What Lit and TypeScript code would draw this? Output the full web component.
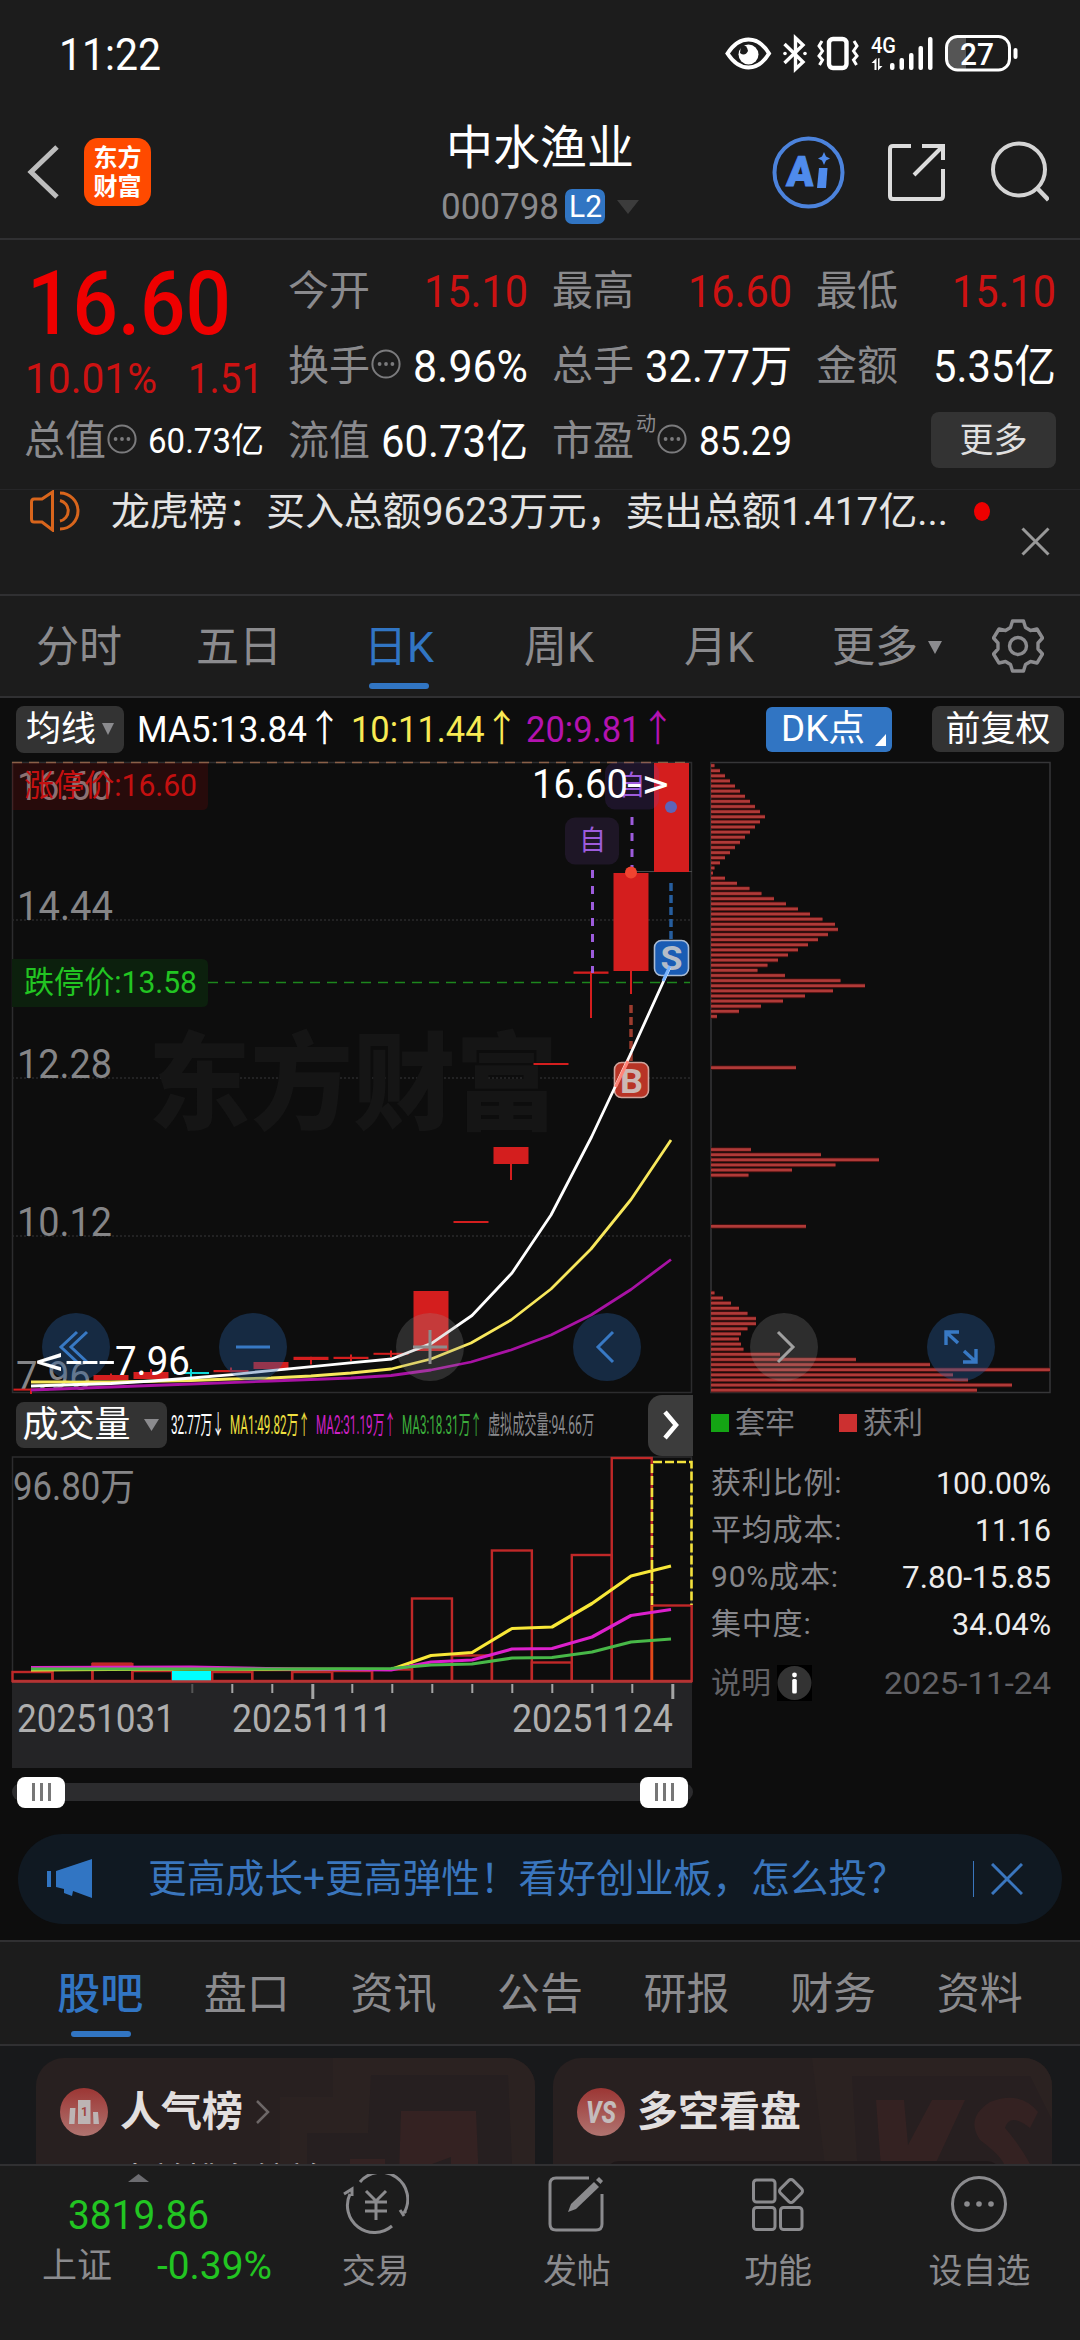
import { LitElement, html, svg, css } from "lit";
import { customElement, property } from "lit/decorators.js";

/** Single line of text condensed or stretched to a given width. */
@customElement("fit-text")
class FitText extends LitElement {
  @property({ type: Number }) w = 0;
  static styles = css`
    :host { display: inline-block; white-space: nowrap; line-height: 1; flex: none; }
    .in { display: inline-block; transform-origin: 0 50%; }
  `;
  fit() {
    const s = this.renderRoot.querySelector(".in") as HTMLElement;
    this.style.width = this.w + "px";
    s.style.transform = "none";
    const n = s.getBoundingClientRect().width;
    if (n > 0) s.style.transform = `scaleX(${this.w / n})`;
  }
  firstUpdated() {
    this.fit();
    requestAnimationFrame(() => this.fit());
  }
  render() {
    return html`<span class="in"><slot></slot></span>`;
  }
}

const RED = "#d41e1e";
const X = (i: number) => 31 + 40 * i;

const MA5 = "31,1386 111,1383.5 152,1381 192,1378 232,1374.6 268,1370.8 312,1366.6 350,1362.8 391.5,1359 431.5,1343.4 472,1315.5 512,1273 551,1215 591.5,1137 631,1053 670,967";
const MA10 = "31,1382 111,1382 191,1380.5 231,1379 271,1378 311,1376 351,1373 391,1369 431,1359 471,1343 511,1320 551,1289 591,1249 631,1199.5 671,1140";
const MA20 = "31,1390 111,1387 191,1384 271,1381 351,1378 391,1375.5 431,1370 471,1362 511,1350 551,1335 591,1315 631,1289.5 671,1259.5";

// center, body top, body bottom, wick top, wick bottom
const CANDLES: number[][] = [
  [31, 1388.6, 1390.6, 1388.6, 1394],
  [111, 1375, 1380, 1373.5, 1380],
  [151, 1372, 1379, 1369, 1379],
  [231, 1370, 1372.2, 1367.5, 1372],
  [271, 1362, 1369, 1362, 1369],
  [311, 1356.8, 1360, 1356.8, 1364.5],
  [351, 1356.8, 1359, 1354.5, 1361],
  [391, 1352.8, 1354.8, 1350.5, 1357],
  [431, 1291, 1351, 1291, 1351],
  [471, 1221, 1223, 1221, 1223],
  [511, 1147, 1164, 1147, 1180],
  [551, 1063, 1065, 1063, 1065],
  [591, 971.5, 973.8, 971.5, 1018],
  [631, 873, 971, 873, 994],
  [671.5, 763, 872, 763, 872],
];

const CHIPS: [number, number[]][] = [
  [0, [3.5, 9, 14, 19, 24, 29, 34, 39, 44, 49, 54, 49, 44, 39, 34, 29, 24, 19, 14, 9, 3.5, 2, 14, 26, 38.5, 50.5, 63, 75, 87, 99, 111.5, 124, 127, 117, 107, 97, 87, 77, 67, 56.5, 46.5, 74, 129.5, 154, 122, 94, 72, 50, 28, 6]],
  [59, [85]],
  [75, [40, 110, 168, 124.5, 81, 37.5]],
  [90, [95]],
  [103, [3.5, 12, 20, 28, 36.5, 45, 45, 36.5, 30, 28, 30, 32.5, 69, 145, 219, 339, 242, 257, 301, 266]],
];

const VOL_TOPS = [1672, 1669.5, 1664, 1671, 0, 1672, 1670, 1672, 1671, 1669.5, 1598.5, 1655.5, 1550.5, 1662.5, 1555, 1458, 1605.5];

const t = (x: number, y: number, size: number, w: number, s: string, fill: string, extra = "") =>
  svg`<text class=${extra} x=${x} y=${y} font-size=${size} textLength=${w} lengthAdjust="spacingAndGlyphs" fill=${fill}>${s}</text>`;

const more = html`<svg class="more-ico" width="30" height="30" viewBox="0 0 30 30"><circle cx="15" cy="15" r="13.6" fill="none" stroke="#7b7b7d" stroke-width="2"/><circle cx="8.6" cy="15" r="1.9" fill="#7b7b7d"/><circle cx="15" cy="15" r="1.9" fill="#7b7b7d"/><circle cx="21.4" cy="15" r="1.9" fill="#7b7b7d"/></svg>`;
const tri = (w: number, h: number, c: string) =>
  html`<svg width=${w} height=${h} viewBox="0 0 10 10" preserveAspectRatio="none"><path d="M0 0H10L5 10Z" fill=${c}/></svg>`;

@customElement("app-root")
class AppRoot extends LitElement {
  static styles = css`
    :host { display: block; width: 1080px; height: 2340px; overflow: hidden; background: #0d0d0d; color: #fff; font-family: Roboto, "Noto Sans CJK SC", sans-serif; line-height: 1; }
    * { box-sizing: border-box; }
    svg { display: block; flex: none; }
    svg text { font-family: Roboto, "Noto Sans CJK SC", sans-serif; }
    .row { display: flex; align-items: center; }
    .dark { background: #1c1c1c; }
    .gray { color: #8a8a8d; }
    .c1 { color: #f0e040; }
    .c2 { color: #cc20c4; }
    .c3 { color: #3cae3c; }
    .wm { font-weight: 900; }
    .mark { font-weight: 700; }

    .status { height: 108px; padding: 0 62px 0 59px; justify-content: space-between; font-size: 45px; }
    .status .icons { height: 40px; }

    .head { height: 132px; border-bottom: 2px solid #303032; padding: 0 31px 0 26px; display: grid; grid-template-columns: 285px 1fr 280px; align-items: start; }
    .head .left { padding-top: 30px; gap: 25px; }
    .logo { width: 67px; height: 68px; border-radius: 14px; background: #ff4a00; display: flex; flex-direction: column; align-items: center; justify-content: center; gap: 5px; font-weight: 700; font-size: 24px; }
    .mid { display: flex; flex-direction: column; align-items: center; padding-top: 16px; }
    .title { font-size: 47px; line-height: 48px; }
    .code { font-size: 37px; margin-top: 17px; gap: 6px; height: 35px; }
    .l2 { background: #3175c3; border-radius: 7px; width: 40px; height: 35px; display: flex; align-items: center; justify-content: center; font-size: 31px; color: #fff; }
    .code svg { margin-left: 6px; }
    .head .right { padding-top: 26px; justify-content: flex-end; }

    .quote { height: 249px; padding: 14px 24px 0; display: grid; grid-template-columns: repeat(4, 240px); column-gap: 24px; grid-template-rows: 75px 75px 75px; }
    .cell { justify-content: space-between; font-size: 41px; }
    .cell .lab { height: 44px; }
    .cell .num { font-size: 44px; }
    .cell .sm { font-size: 35px; }
    .cell .md { font-size: 40px; }
    .r { color: #cc1212; }
    .price { grid-row: span 2; }
    .big { font-size: 89px; font-weight: 500; color: #ee0000; margin: 5px 0 0 3px; }
    .chg { font-size: 42px; gap: 31px; margin: 10px 0 0 1px; }
    .more-ico { margin: -5px 0 0 1px; }
    .sup { font-size: 20px; align-self: flex-start; margin: -6px 0 0 2px; }
    .btn { background: #333333; border-radius: 8px; display: flex; align-items: center; justify-content: center; }
    .more-btn { width: 125px; height: 56px; font-size: 34px; color: #e0e0e0; margin: -3px 0 0 auto; }

    .notice { height: 105px; border-top: 1px solid #262628; padding: 0 30px; display: flex; align-items: flex-start; }
    .notice .msg { font-size: 39px; color: #e4e4e4; margin: 3px 0 0 31px; }
    .dot { width: 19px; height: 19px; border-radius: 50%; background: #ee0000; margin: 12px 0 0 26px; }
    .notice .x { margin: 37px 0 0 31px; }

    .periods { height: 104px; border-top: 2px solid #303032; border-bottom: 2px solid #303032; display: grid; grid-template-columns: repeat(5, 160px) 176px 84px; font-size: 43px; color: #8b8b8e; }
    .periods > div, .tabs > div { display: flex; flex-direction: column; align-items: center; justify-content: center; padding-top: 3px; }
    .periods > div { padding-right: 2px; }
    .periods > div.set { padding: 0; }
    .periods > div.rowc { flex-direction: row; gap: 10px; }
    .periods .on, .tabs .on { color: #3175c3; position: relative; }
    .periods .on::after, .tabs .on::after { content: ""; position: absolute; width: 60px; height: 6px; border-radius: 3px; background: #3175c3; bottom: 7px; left: 50%; margin-left: -31px; }

    .mas { height: 62px; padding: 0 16px; font-size: 37px; }
    .mas .m { width: 108px; height: 47px; gap: 6px; font-size: 35px; margin-right: 13px; }
    .mas .yl { color: #f8ea54; margin-left: 9px; }
    .mas .mg { color: #b412b0; margin-left: 7px; }
    .mas .dk { position: relative; width: 126px; height: 45px; border-radius: 6px; background: #3175c3; font-size: 36px; margin-left: auto; padding-right: 12px; }
    .mas .dk svg { position: absolute; right: 6px; bottom: 6px; }
    .mas .fq { width: 132px; height: 46px; font-size: 35px; margin-left: 40px; }

    .zone { position: relative; display: grid; grid-template-columns: 700px 380px; height: 1066px; align-items: start; }
    .tools { position: absolute; left: 42px; top: 553px; display: flex; gap: 109px; }
    .tool { width: 68px; height: 68px; border-radius: 50%; background: rgba(38, 95, 160, 0.36); display: flex; align-items: center; justify-content: center; }
    .tool.off { background: rgba(150, 150, 150, 0.24); }
    .low { position: absolute; left: 35px; top: 582px; font-size: 40px; }

    .volhead { height: 62px; padding: 0 7px 0 16px; font-size: 26px; }
    .volhead .v { width: 151px; height: 46px; gap: 13px; font-size: 36px; margin-right: 4px; padding-right: 2px; }
    .volhead .nx { width: 45px; height: 61px; border-radius: 14px 0 0 14px; background: #3c3c3c; margin-left: auto; }
    .volhead fit-text { margin-right: 6px; }
    .slider { margin: 15px 7px 0 12px; height: 18px; border-radius: 9px; background: #2c2c2e; padding: 0 5px; justify-content: space-between; }
    .thumb { width: 48px; height: 31px; border-radius: 8px; background: #fff; display: flex; align-items: center; justify-content: center; gap: 5px; }
    .thumb i { width: 3px; height: 18px; background: #777; }

    .legend { height: 57px; padding: 0 0 0 11px; font-size: 30px; color: #7e7e82; }
    .sq { width: 18px; height: 18px; background: #14a414; margin-right: 6px; }
    .sq.rd { background: #cc3030; margin-left: 44px; }
    .stats { padding: 8px 29px 0 11px; }
    .st { display: flex; align-items: center; justify-content: space-between; height: 47px; font-size: 30px; color: #86868a; }
    .st .k { letter-spacing: 0.8px; }
    .st .v { font-size: 32px; color: #ececec; }
    .st.note { height: 72px; color: #626266; }
    .st.note .v { color: #626266; }
    .st.note svg { margin-left: 6px; background: #000; }

    .banner { height: 90px; margin: 8px 18px 16px; border-radius: 45px; background: #101922; color: #3a76be; font-size: 39px; padding: 0 39px 0 29px; }
    .banner .bar { width: 1px; height: 36px; background: #3a76be; margin: 0 17px 0 auto; }
    .banner .msg { margin-left: 55px; }

    .tabs { height: 106px; border-top: 2px solid #303032; border-bottom: 2px solid #303032; padding: 0 27px; display: grid; grid-template-columns: repeat(7, 1fr); font-size: 43px; color: #8b8b8e; }
    .tabs .on { font-weight: 500; }
    .tabs .on::after { margin-left: -29px; }

    .cards { height: 118px; overflow: hidden; background: #18191b; padding: 12px 28px 0 36px; display: grid; grid-template-columns: 499px 499px; column-gap: 18px; align-items: start; }
    .card { height: 150px; border-radius: 28px; background: #282020; overflow: hidden; position: relative; padding: 30px 0 0 24px; }
    .card .bg { position: absolute; left: 0; top: 0; }
    .ct { position: relative; gap: 12px; font-size: 41px; font-weight: 700; color: #e2dfdf; height: 48px; }
    .sub { position: relative; font-size: 34px; color: #b8b4b4; margin: 27px 0 0 58px; white-space: nowrap; }

    .nav { height: 176px; border-top: 2px solid #303032; display: grid; grid-template-columns: 275px repeat(4, 201.25px); font-size: 34px; color: #8b8b8e; }
    .ni { display: flex; flex-direction: column; align-items: center; padding-top: 8px; }
    .ni svg { margin-bottom: 20px; }
    .idx { display: flex; flex-direction: column; padding: 8px 0 0 42px; }
    .idx .g { color: #22c522; }
    .idx svg { margin-left: 86px; }
    .idx .val { font-size: 40px; margin: 14px 0 0 26px; }
    .idx .pct { margin-top: 11px; font-size: 35px; gap: 45px; }
    .idx .pct .g { font-size: 38px; }
  `;

  status() {
    return html`<div class="status row dark"><fit-text w="102">11:22</fit-text>
      <svg class="icons" width="293" height="40" viewBox="725 34 293 40" fill="none" stroke="#fff">
        <path d="M727.5 53.5C734 43.500 741 39.500 748.500 39.500S763 43.500 769 53.500C763 63.500 756 67.500 748.500 67.500S734 63.500 727.500 53.500Z" stroke-width="4"/>
        <circle cx="748.500" cy="54.500" r="10" fill="#fff" stroke="none"/><path d="M741 45q6-1 7 6q-3 6-8 2z" fill="#1c1c1c" stroke="none"/>
        <path d="M784.500 44L803 62L795.500 69V38L803 45L784.500 63" stroke-width="3.400"/>
        <circle cx="785" cy="53.500" r="1.800" fill="#fff" stroke="none"/><circle cx="805" cy="53.500" r="1.800" fill="#fff" stroke="none"/>
        <rect x="829" y="39" width="17.500" height="29" rx="4" stroke-width="4.400"/>
        <path d="M822 41l-3 5l3.500 5l-3.500 5l3.500 4l-3 5M854 41l3 5l-3.500 5l3.500 5l-3.500 4l3 5" stroke-width="3"/>
        <g fill="#fff" stroke="none">
          <text x="871" y="53" font-size="22" font-weight="500" textLength="25" lengthAdjust="spacingAndGlyphs">4G</text>
          <rect x="890" y="63" width="4.500" height="7" rx="2"/><rect x="899.500" y="58" width="4.500" height="12" rx="2"/><rect x="909" y="53" width="4.500" height="17" rx="2"/><rect x="918.500" y="46" width="4.500" height="24" rx="2"/><rect x="928" y="37" width="4.500" height="33" rx="2"/>
          <path d="M874.500 70V63h-3l5-5v12zM879.500 58V66h3l-4.500 4.500v-12z"/>
          <path d="M957 37.500H966V69H957Q947.500 69 947.500 60V46Q947.500 37.500 957 37.500Z" fill="#555"/>
          <rect x="1013.500" y="48" width="4" height="11" rx="2"/>
          <text x="960" y="65" font-size="32" font-weight="500" textLength="34" lengthAdjust="spacingAndGlyphs">27</text>
        </g>
        <rect x="946.500" y="36.500" width="63" height="33.500" rx="11" stroke-width="3"/>
      </svg></div>`;
  }

  header() {
    return html`<div class="head dark">
      <div class="left row"><svg width="33" height="56" viewBox="0 0 33 56"><path d="M31 3L5 28L31 53" fill="none" stroke="#bdbdbd" stroke-width="5"/></svg>
        <div class="logo"><span>东方</span><span>财富</span></div></div>
      <div class="mid"><div class="title">中水渔业</div>
        <div class="code row gray"><fit-text w="118">000798</fit-text><span class="l2"><fit-text w="33">L2</fit-text></span>${tri(22, 14, "#3c3c3c")}</div></div>
      <div class="right row"><svg width="278" height="76" viewBox="771 134 278 76" fill="none">
        <circle cx="808.500" cy="172.500" r="34" stroke="#4c83dc" stroke-width="4"/>
        <g transform="translate(786 186) skewX(-4)"><text x="0" y="0" font-size="42" font-weight="900" fill="#4f8bec" stroke="#4f8bec" stroke-width="1" textLength="27" lengthAdjust="spacingAndGlyphs">A</text></g>
        <path d="M819 168h8.500l-1.500 20h-9z" fill="#4f8bec"/><path d="M824 152l2 4.500 4 2-4 2-2 4.500-2-4.500-4-2 4-2z" fill="#4f8bec"/>
        <g stroke="#dcdcdc" stroke-width="4"><path d="M911 146H893Q890 146 890 149V186V196Q890 199 893 199H940Q943 199 943 196V169"/><path d="M922 146H943V160M914 175L943 146"/></g>
        <circle cx="1019" cy="169.500" r="26" stroke="#d4d4d4" stroke-width="4"/><path d="M1037 188L1048.500 200" stroke="#d4d4d4" stroke-width="4.500"/>
      </svg></div>
    </div>`;
  }

  quote() {
    return html`<div class="quote dark">
      <div class="price"><div class="big"><fit-text w="204">16.60</fit-text></div>
        <div class="chg row r"><fit-text w="132">10.01%</fit-text><fit-text w="75">1.51</fit-text></div></div>
      <div class="cell row"><span class="lab row gray">今开</span><fit-text class="num r" w="104">15.10</fit-text></div>
      <div class="cell row"><span class="lab row gray">最高</span><fit-text class="num r" w="104">16.60</fit-text></div>
      <div class="cell row"><span class="lab row gray">最低</span><fit-text class="num r" w="104">15.10</fit-text></div>
      <div class="cell row"><span class="lab row gray">换手${more}</span><fit-text class="num" w="115">8.96%</fit-text></div>
      <div class="cell row"><span class="lab row gray">总手</span><fit-text class="num" w="147">32.77万</fit-text></div>
      <div class="cell row"><span class="lab row gray">金额</span><fit-text class="num" w="123">5.35亿</fit-text></div>
      <div class="cell row"><span class="lab row gray">总值${more}</span><fit-text class="sm" w="116">60.73亿</fit-text></div>
      <div class="cell row"><span class="lab row gray">流值</span><fit-text class="num" w="147">60.73亿</fit-text></div>
      <div class="cell row"><span class="lab row gray">市盈<span class="sup">动</span>${more}</span><fit-text class="md" w="93">85.29</fit-text></div>
      <div class="cell row"><span class="btn more-btn">更多</span></div>
    </div>
    <div class="notice dark">
      <svg width="50" height="42" viewBox="30 491 50 42" fill="none" stroke="#d8651c" stroke-width="3"><path d="M52.500 493V531L42 523H34Q31.500 523 31.500 520V503Q31.500 500 34 500H42Z"/><path d="M60 501.500A10.500 10.500 0 0 1 60 522M60 494A18 18 0 0 1 60 530"/></svg>
      <div class="msg"><fit-text w="837">龙虎榜：买入总额9623万元，卖出总额1.417亿...</fit-text></div>
      <div class="dot"></div>
      <svg class="x" width="29" height="29" viewBox="0 0 29 29"><path d="M1.500 1.500L27.500 27.500M27.500 1.500L1.500 27.500" stroke="#999" stroke-width="3"/></svg>
    </div>`;
  }

  periods() {
    return html`<div class="periods dark"><div>分时</div><div>五日</div><div class="on">日K</div><div>周K</div><div>月K</div>
      <div class="rowc">更多${tri(14, 13, "#8b8b8e")}</div>
      <div class="set"><svg width="52" height="54" viewBox="-26 -27 52 54" fill="none" stroke="#8b8b8e" stroke-width="3.400" stroke-linejoin="round"><path d="M-5.500 -25H5.500L7.500 -18.500L12.500 -15.500L19 -17L24.500 -8L20 -3V3L24.500 8L19 17L12.500 15.500L7.500 18.500L5.500 25H-5.500L-7.500 18.500L-12.500 15.500L-19 17L-24.500 8L-20 3V-3L-24.500 -8L-19 -17L-12.500 -15.500L-7.500 -18.500Z"/><circle r="8.500"/></svg></div></div>
      <div class="mas row"><span class="btn m">均线${tri(12, 12, "#8b8b8e")}</span>
        <fit-text w="205">MA5:13.84↑</fit-text><fit-text class="yl" w="168">10:11.44↑</fit-text><fit-text class="mg" w="149">20:9.81↑</fit-text>
        <span class="btn dk"><fit-text w="84">DK点</fit-text><svg width="11" height="12" viewBox="0 0 11 12"><path d="M11 0V12H0Z" fill="#fff"/></svg></span>
        <span class="btn fq">前复权</span></div>`;
  }

  kline() {
    return html`<svg width="700" height="634" viewBox="0 760 700 634">
      <rect x="12.500" y="762.500" width="679" height="630" fill="none" stroke="#2c2c2e" stroke-width="1.500"/>
      <g stroke="#2a2a2b" stroke-width="1.500" stroke-dasharray="2 2"><path d="M12 920H692M12 1078H692M12 1236H692"/></g>
      ${t(148, 1121, 106, 410, "东方财富", "#151515", "wm")}
      <path d="M12 762.500H692" stroke="#8a6048" stroke-width="1.500" stroke-dasharray="10 7"/>
      ${t(17, 800, 40, 95, "16.60", "#858587")}${t(17, 920, 40, 96, "14.44", "#858587")}${t(17, 1078, 40, 95, "12.28", "#858587")}${t(17, 1236, 40, 95, "10.12", "#858587")}${t(16, 1390, 40, 75, "7.96", "#858587")}
      <path d="M12 763H208V804Q208 810 202 810H12Z" fill="rgba(190,0,0,.15)"/>${t(24, 796, 31, 173, "涨停价:16.60", "#c41010")}
      <path d="M12 959H202Q208 959 208 965V1001Q208 1007 202 1007H12Z" fill="#0c200d"/>${t(24, 993, 31, 173, "跌停价:13.58", "#22c522")}
      <path d="M208 982.500H690" stroke="#1d861d" stroke-width="1.700" stroke-dasharray="10 7"/>
      <path d="M631 871.500H692" stroke="#4a4a4a" stroke-width="1.200"/>
      ${CANDLES.map((c) => svg`<rect x=${c[0] - 17.5} y=${c[1]} width="35" height=${c[2] - c[1]} fill=${RED}/><rect x=${c[0] - 1} y=${c[3]} width="2" height=${c[4] - c[3]} fill=${RED}/>`)}
      <path d="M174 1373H209M191 1369V1377" stroke="#10d8d8" stroke-width="2"/>
      <g fill="none" stroke-width="3" stroke-dasharray="8 8"><path d="M592.500 870V973" stroke="#9d5cdc"/><path d="M632 817V872" stroke="#9d5cdc"/></g>
      <rect x="565" y="817.500" width="54" height="47" rx="10" fill="#1e1626"/>${t(579, 850, 27, 27, "自", "#9d5cdc")}
      <rect x="605" y="762.500" width="54" height="47" rx="10" fill="rgba(120,60,190,.16)"/>${t(618.5, 795, 27, 27, "自", "#9d5cdc")}
      <path d="M671 883V940" stroke="#265e9e" stroke-width="3.500" stroke-dasharray="8 4"/>
      <path d="M631 1005V1062" stroke="#9c3c2e" stroke-width="3.500" stroke-dasharray="8 4"/>
      <g stroke-width="1.600"><rect x="654.500" y="940.500" width="34" height="35" rx="7" fill="#1a5cb4" stroke="#a9bbd4"/><rect x="614.500" y="1062.500" width="34" height="35" rx="7" fill="#b83426" stroke="#d0a49c"/></g>
      ${t(660.5, 970, 34, 22, "S", "#b4bcc8", "mark")}${t(620, 1092.5, 34, 23, "B", "#ccb8b4", "mark")}
      <g fill="none" stroke-width="2.800" stroke-linejoin="round"><polyline points=${MA20} stroke="#a812a4"/><polyline points=${MA10} stroke="#f8e85c"/><polyline points=${MA5} stroke="#ffffff"/></g>
      <path d="M663 981L670 966" stroke="#78b4ff" stroke-width="3"/><path d="M615.500 1087L628 1061" stroke="#ff8478" stroke-width="3"/>
      <circle cx="671" cy="807" r="6" fill="#5c64b8"/><circle cx="631" cy="872.500" r="6" fill="#f04430"/>
      ${t(532, 798, 41, 96, "16.60", "#fff")}${t(627, 798, 41, 42, "->", "#fff")}
    </svg>`;
  }

  dist() {
    return html`<svg width="380" height="634" viewBox="700 760 380 634">
      <rect x="711" y="762.500" width="339" height="630" fill="none" stroke="#363638" stroke-width="1.500"/>
      ${CHIPS.map(([s, ws]) => ws.map((w, k) => svg`<rect x="711" y=${763.4 + 5.12 * (s + k)} width=${w} height="4.400" fill="#4a1110"/><rect x="711" y=${764.2 + 5.12 * (s + k)} width=${w} height="2.700" fill="#b03a38"/>`))}
    </svg>`;
  }

  volume() {
    return html`<svg width="700" height="312" viewBox="0 1456 700 312">
      <rect x="12" y="1684" width="680" height="84" fill="#242426"/>
      <rect x="12.500" y="1457" width="679" height="226" fill="none" stroke="#2c2c2e" stroke-width="1.500"/>
      ${t(13, 1500, 38, 122, "96.80万", "#858587")}
      ${VOL_TOPS.map((y, i) => y ? svg`<rect x=${12.5 + 39.95 * i} y=${y} width="39.950" height=${1681 - y} fill="none" stroke="#c02828" stroke-width="2.400"/>` : svg`<rect x="172" y="1671" width="39" height="10.500" fill="#00ffff"/>`)}
      <path d="M92 1664.500H132" stroke="#c02828" stroke-width="4"/>
      <path d="M12 1681.500H692" stroke="#b43434" stroke-width="2.500"/>
      <path d="M652 1605V1462H691.500V1605" fill="none" stroke="#f4e23c" stroke-width="2.600" stroke-dasharray="9 3"/>
      <path d="M652 1606V1680" stroke="#e04a18" stroke-width="2.500"/>
      <g fill="none" stroke-width="3.200" stroke-linejoin="round">
        <polyline stroke="#f8e838" points="31,1670 191,1669 391,1669.500 431,1655.500 472,1652.500 512,1628.500 552,1627 592,1603.500 631,1576 671,1566"/>
        <polyline stroke="#dc20cc" points="31,1667.500 191,1667 291,1669 391,1670 431,1662 472,1660 512,1649 552,1648.500 592,1637 631,1615.500 671,1609.500"/>
        <polyline stroke="#48b848" points="31,1669 191,1669 291,1669 391,1668.500 431,1665 472,1664 512,1658 552,1657.500 592,1652 631,1642 671,1639"/>
      </g>
      ${[4, 5, 6, 7, 8, 9, 10, 11, 12, 13, 14, 15, 16].map((i) => svg`<rect x=${X(i) + 0.3} y="1684" width=${i === 7 || i === 16 ? 3 : 2} height=${i === 7 || i === 16 ? 15 : 9} fill=${i === 4 ? "#555" : "#a4a4a4"}/>`)}
      ${t(17, 1732, 38, 158, "20251031", "#aeaeae")}${t(232, 1732, 38, 160, "20251111", "#aeaeae")}${t(512, 1732, 38, 161, "20251124", "#aeaeae")}
    </svg>`;
  }

  tools() {
    const ic = (d: string, c: string, w = 3) => html`<svg width="40" height="40" viewBox="-20 -20 40 40"><path d=${d} fill="none" stroke=${c} stroke-width=${w}/></svg>`;
    const b = "#3879c4", g = "#8c8c8c";
    return html`<div class="tools">
      <div class="tool">${ic("M1 -15L-15 0L1 15M11 -15L-5 0L11 15", b)}</div>
      <div class="tool">${ic("M-17 0H17", b)}</div>
      <div class="tool off">${ic("M-17 0H17M0 -17V17", g)}</div>
      <div class="tool">${ic("M6 -15L-9 0L6 15", b)}</div>
      <div class="tool off">${ic("M-6 -15L9 0L-6 15", "#a0a0a0")}</div>
      <div class="tool">${ic("M-15 -2V-15H-2M-15 -15L-3 -4M3 4L15 15M15 2V15H2", b, 3.4)}</div>
    </div>`;
  }

  zone() {
    return html`<div class="zone">
      <div>${this.kline()}
        <div class="volhead row"><span class="btn v">成交量${tri(15, 12, "#8b8b8e")}</span>
          <fit-text w="53">32.77万↓</fit-text><fit-text w="80" class="c1">MA1:49.82万↑</fit-text><fit-text w="80" class="c2">MA2:31.19万↑</fit-text><fit-text w="80" class="c3">MA3:18.31万↑</fit-text><fit-text w="106" class="gray">虚拟成交量:94.66万</fit-text>
          <span class="btn nx"><svg width="18" height="30" viewBox="0 0 18 30"><path d="M3 2L14 15L3 28" fill="none" stroke="#fff" stroke-width="4.500"/></svg></span></div>
        ${this.volume()}
        <div class="slider row"><span class="thumb"><i></i><i></i><i></i></span><span class="thumb"><i></i><i></i><i></i></span></div>
      </div>
      <div>${this.dist()}
        <div class="legend row"><span class="sq"></span>套牢<span class="sq rd"></span>获利</div>
        <div class="stats">
          <div class="st"><span class="k">获利比例:</span><fit-text class="v" w="115">100.00%</fit-text></div>
          <div class="st"><span class="k">平均成本:</span><fit-text class="v" w="76">11.16</fit-text></div>
          <div class="st"><span class="k">90%成本:</span><fit-text class="v" w="149">7.80-15.85</fit-text></div>
          <div class="st"><span class="k">集中度:</span><fit-text class="v" w="99">34.04%</fit-text></div>
          <div class="st note"><span class="row">说明<svg width="35" height="36" viewBox="0 0 35 36"><circle cx="17.500" cy="18" r="17" fill="#333"/><circle cx="17.500" cy="10" r="2.400" fill="#fff"/><rect x="15.200" y="14" width="4.600" height="14.500" rx="1.500" fill="#fff"/></svg></span><fit-text class="v" w="167">2025-11-24</fit-text></div>
        </div>
      </div>
      ${this.tools()}
      <div class="low row"><fit-text w="80">&lt;---</fit-text><fit-text w="75">7.96</fit-text></div>
    </div>`;
  }

  bottom() {
    return html`<div class="banner row"><svg width="46" height="40" viewBox="48 1859 46 40" fill="#3175c3"><rect x="48" y="1871" width="4" height="16"/><path d="M57 1871L93 1859V1898L74 1891L73 1896L65 1893V1889L57 1887Z"/></svg>
        <fit-text class="msg" w="758">更高成长+更高弹性！看好创业板，怎么投？</fit-text><span class="bar"></span>
        <svg width="32" height="32" viewBox="0 0 32 32"><path d="M1 1L31 31M31 1L1 31" stroke="#3a76be" stroke-width="3"/></svg></div>
      <div class="tabs dark"><div class="on">股吧</div><div>盘口</div><div>资讯</div><div>公告</div><div>研报</div><div>财务</div><div>资料</div></div>
      <div class="cards">
        <div class="card"><svg class="bg" width="499" height="150" viewBox="36 2058 499 150"><path d="M333 2058H535V2208H280V2097H333Z" fill="#2b2221"/><path d="M371 2075H508L514 2208H307V2133H368Z" fill="#261f20"/><path d="M401 2111H476L480 2208H398ZM350 2159H385V2208H350Z" fill="#342222"/><path d="M432 2164L451 2157V2180H432Z" fill="#261f20"/></svg>
          <div class="ct row"><svg width="48" height="48" viewBox="0 0 48 48"><defs><linearGradient id="g" x1="0" y1="0" x2="0" y2="1"><stop offset="0" stop-color="#9c3634"/><stop offset="1" stop-color="#b07470"/></linearGradient></defs><circle cx="24" cy="24" r="24" fill="url(#g)"/><path d="M10 20H15.500L14.500 36H9ZM18 12H30.500V36H18ZM33 24H38L39 36H33.500Z" fill="#bcb4b4"/><text x="21" y="28" font-size="12" font-weight="700" fill="#a04440">1</text></svg>人气榜<svg width="15" height="24" viewBox="0 0 15 24"><path d="M2 1L13 12L2 23" fill="none" stroke="#6c6666" stroke-width="2.500"/></svg></div>
          <div class="sub">当前排名较前一日</div></div>
        <div class="card"><svg class="bg" width="499" height="150" viewBox="553 2058 499 150"><path d="M812 2058H1052V2208H830Z" fill="#2b2221"/><path d="M852 2076H1030L1052 2120V2208H860Z" fill="#271f20"/><path d="M876 2100H904L908 2145L932 2100H965L915 2208H884ZM1038 2112Q1020 2090 990 2102Q965 2118 980 2140Q1000 2155 1004 2164H1030Q1020 2145 1005 2128Q1010 2112 1030 2128Z" fill="#342222"/><rect x="605" y="2161" width="396" height="60" rx="14" fill="#1e1819"/></svg>
          <div class="ct row"><svg width="48" height="48" viewBox="0 0 48 48"><defs><linearGradient id="h" x1="0" y1="0" x2="0" y2="1"><stop offset="0" stop-color="#9c3634"/><stop offset="1" stop-color="#b07470"/></linearGradient></defs><circle cx="24" cy="24" r="24" fill="url(#h)"/><text x="9" y="35" font-size="32" font-weight="800" font-style="italic" fill="#c4bcbc" textLength="30" lengthAdjust="spacingAndGlyphs">VS</text></svg>多空看盘</div></div>
      </div>
      <div class="nav dark">
        <div class="idx"><svg width="21" height="8" viewBox="0 0 21 8"><path d="M0 8L10.500 0L21 8Z" fill="#6c6c70"/></svg><div class="val g"><fit-text w="141">3819.86</fit-text></div><div class="pct row">上证<fit-text class="g" w="115">-0.39%</fit-text></div></div>
        <div class="ni"><svg width="66" height="60" viewBox="-33 -30 66 60" fill="none" stroke="#8b8b8e" stroke-width="3"><path d="M-16 -22A27 27 0 0 1 28 9L30 7M28 12L24 6M16 22A27 27 0 0 1 -26 -10M-32 -10L-24 -15V-8"/><path d="M-10 -13L0 -3L10 -13M0 -3V16M-11 -2H11M-11 7H11"/></svg>交易</div>
        <div class="ni"><svg width="60" height="60" viewBox="-29 -30 60 60" fill="none" stroke="#8b8b8e" stroke-width="3"><path d="M13 -26H-20Q-26 -26 -26 -20V20Q-26 26 -20 26H20Q26 26 26 20V-10"/><path d="M-8 8L-5 0L18 -22L23 -17L0 5Z" fill="#8b8b8e" stroke="none"/><path d="M20 -24L23 -27L27 -23L24.500 -20Z" fill="#8b8b8e" stroke="none"/></svg>发帖</div>
        <div class="ni"><svg width="60" height="60" viewBox="-30 -30 60 60" fill="none" stroke="#8b8b8e" stroke-width="3"><rect x="-24.500" y="-24" width="21.500" height="22" rx="3"/><rect x="-24.500" y="3.500" width="21.500" height="22" rx="3"/><rect x="2.500" y="3.500" width="21.500" height="22" rx="3"/><rect x="4" y="-22" width="18" height="18" rx="3" transform="rotate(45 13 -13)"/></svg>功能</div>
        <div class="ni"><svg width="60" height="60" viewBox="-30 -30 60 60" fill="none" stroke="#8b8b8e" stroke-width="3"><circle r="26.500"/><g fill="#8b8b8e" stroke="none"><circle cx="-12" r="2.800"/><circle r="2.800"/><circle cx="12" r="2.800"/></g></svg>设自选</div>
      </div>`;
  }

  render() {
    return html`${this.status()}${this.header()}${this.quote()}${this.periods()}${this.zone()}${this.bottom()}`;
  }
}
